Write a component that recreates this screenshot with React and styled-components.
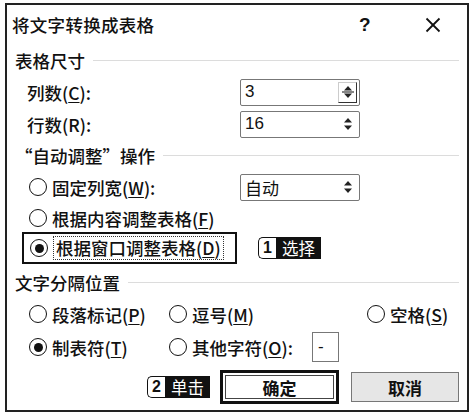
import React from 'react'
import styled, { createGlobalStyle } from 'styled-components'

const GlobalStyle = createGlobalStyle`
  html, body {
    margin: 0;
    padding: 0;
    background: #fff;
  }
  body {
    font-family: "Noto Sans CJK SC", "Noto Sans", sans-serif;
    color: #111;
  }
`

const Spinner = ({ boxed }) => (
  <SpinBox boxed={boxed}>
    <svg width="12" height="18" viewBox="0 0 12 18">
      <path d="M6 3 L10 7.5 L2 7.5 Z" fill="#222" />
      {boxed && <line x1="0" y1="9" x2="12" y2="9" stroke="#333" strokeWidth="1.2" />}
      <path d="M2 10.5 L10 10.5 L6 15 Z" fill="#222" />
    </svg>
  </SpinBox>
)

const Radio = ({ checked }) => (
  <RadioCircle>{checked && <RadioDot />}</RadioCircle>
)

const Key = ({ children }) => <U>{children}</U>

const App = () => {
  return (
    <>
      <GlobalStyle />
      <Page>
        <Dialog>
          <TitleBar>
            <Title>将文字转换成表格</Title>
            <Help>?</Help>
            <Close>
              <svg width="16" height="16" viewBox="0 0 16 16">
                <line x1="1.5" y1="1.5" x2="14.5" y2="14.5" stroke="#111" strokeWidth="1.8" />
                <line x1="14.5" y1="1.5" x2="1.5" y2="14.5" stroke="#111" strokeWidth="1.8" />
              </svg>
            </Close>
          </TitleBar>

          <Section h={32}>
            <SectionTitle>表格尺寸</SectionTitle>
            <Rule />
          </Section>
          <FieldRow h={32}>
            <Label>列数(<Key>C</Key>):</Label>
            <Field>
              <FieldText>3</FieldText>
              <Spinner boxed />
            </Field>
          </FieldRow>
          <FieldRow h={32}>
            <Label>行数(R):</Label>
            <Field>
              <FieldText>16</FieldText>
              <Spinner />
            </Field>
          </FieldRow>

          <Section h={30}>
            <SectionTitle>“自动调整”操作</SectionTitle>
            <Rule />
          </Section>
          <FieldRow h={34} pl={22}>
            <Option>
              <Radio />
              <span>固定列宽(<Key>W</Key>):</span>
            </Option>
            <Field>
              <FieldText>自动</FieldText>
              <Spinner />
            </Field>
          </FieldRow>
          <Row h={28} pl={22}>
            <Option>
              <Radio />
              <span>根据内容调整表格(<Key>F</Key>)</span>
            </Option>
          </Row>
          <Row h={32} pl={15}>
            <Selected>
              <Radio checked />
              <Focus>根据窗口调整表格(<Key>D</Key>)</Focus>
            </Selected>
            <Badge ml={21}>
              <BadgeNum>1</BadgeNum>
              <BadgeText>选择</BadgeText>
            </Badge>
          </Row>

          <Section h={36}>
            <SectionTitle>文字分隔位置</SectionTitle>
            <Rule />
          </Section>
          <SplitGrid>
            <Option>
              <Radio />
              <span>段落标记(<Key>P</Key>)</span>
            </Option>
            <Option>
              <Radio />
              <span>逗号(<Key>M</Key>)</span>
            </Option>
            <Option>
              <Radio />
              <span>空格(<Key>S</Key>)</span>
            </Option>
            <Option>
              <Radio checked />
              <span>制表符(<Key>T</Key>)</span>
            </Option>
            <Option>
              <Radio />
              <span>其他字符(<Key>O</Key>):</span>
              <CharBox>-</CharBox>
            </Option>
            <span />
          </SplitGrid>

          <Footer>
            <Badge>
              <BadgeNum>2</BadgeNum>
              <BadgeText>单击</BadgeText>
            </Badge>
            <OkButton>
              <OkInner>确定</OkInner>
            </OkButton>
            <CancelButton>取消</CancelButton>
          </Footer>
        </Dialog>
      </Page>
    </>
  )
}

export default App

// styles
const Page = styled.div`
  width: 472px;
  height: 420px;
  padding: 3px 0 0 5px;
  box-sizing: border-box;
`

const Dialog = styled.div`
  width: 464px;
  height: 409px;
  box-sizing: border-box;
  border: 2px solid #222;
  background: #fff;
  display: flex;
  flex-direction: column;
`

const TitleBar = styled.div`
  height: 39px;
  display: flex;
  align-items: center;
  padding-left: 5px;
`

const Title = styled.div`
  font-size: 17.5px;
  font-weight: 500;
  letter-spacing: 0.3px;
  flex: 1;
`

const Help = styled.div`
  font-family: "Liberation Sans", sans-serif;
  font-size: 19px;
  font-weight: 700;
  width: 12px;
  margin-right: 54px;
`

const Close = styled.div`
  width: 16px;
  height: 16px;
  margin-right: 26px;
  display: flex;
`

const Section = styled.div`
  height: ${p => p.h}px;
  display: flex;
  align-items: center;
  padding: 0 8px 0 8px;
`

const SectionTitle = styled.div`
  font-size: 17.5px;
  font-weight: 500;
  white-space: nowrap;
`

const Rule = styled.div`
  flex: 1;
  height: 1px;
  background: #dcdcdc;
  margin-left: 8px;
`

const Row = styled.div`
  height: ${p => p.h}px;
  display: flex;
  align-items: center;
  padding-left: ${p => p.pl || 20}px;
  font-size: 17.5px;
`

const FieldRow = styled(Row)`
  display: grid;
  grid-template-columns: ${p => 233 - (p.pl || 20)}px 120px;
  align-items: center;
`

const Label = styled.div`
  font-size: 17.5px;
  font-weight: 500;
`

const U = styled.span`
  text-decoration: underline;
  text-underline-offset: 2px;
`

const Field = styled.div`
  height: 27px;
  box-sizing: border-box;
  border: 1.5px solid #777;
  border-radius: 2px;
  display: flex;
  align-items: center;
  padding-left: 4px;
`

const FieldText = styled.div`
  flex: 1;
  font-size: 17px;
  font-family: "Liberation Sans", "Noto Sans CJK SC", sans-serif;
`

const SpinBox = styled.div`
  width: 19px;
  height: 21px;
  margin-right: 2px;
  box-sizing: border-box;
  display: flex;
  align-items: center;
  justify-content: center;
  border-top: ${p => (p.boxed ? '1px solid #ccc' : 'none')};
  border-left: ${p => (p.boxed ? '1px solid #ccc' : 'none')};
  border-bottom: ${p => (p.boxed ? '1.5px solid #333' : 'none')};
  border-right: ${p => (p.boxed ? '1.5px solid #333' : 'none')};
`

const Option = styled.div`
  display: flex;
  align-items: center;
  gap: 5px;
  font-size: 17.5px;
  font-weight: 500;
  white-space: nowrap;
`

const RadioCircle = styled.div`
  width: 18px;
  height: 18px;
  box-sizing: border-box;
  border: 1.8px solid #111;
  border-radius: 50%;
  display: flex;
  align-items: center;
  justify-content: center;
  flex-shrink: 0;
`

const RadioDot = styled.div`
  width: 9px;
  height: 9px;
  border-radius: 50%;
  background: #111;
`

const Selected = styled.div`
  height: 32px;
  width: 215px;
  box-sizing: border-box;
  border: 2.5px solid #111;
  display: flex;
  align-items: center;
  padding-left: 6px;
  gap: 5px;
  font-size: 17.5px;
  font-weight: 500;
  white-space: nowrap;
`

const Focus = styled.span`
  border: 1px dotted #333;
  padding: 0 2px;
  line-height: 22px;
`

const Badge = styled.div`
  display: flex;
  height: 22px;
  margin-left: ${p => p.ml || 0}px;
`

const BadgeNum = styled.div`
  width: 18px;
  box-sizing: border-box;
  border: 1.5px solid #111;
  border-right: none;
  border-radius: 5px 0 0 5px;
  background: #fff;
  font-family: "Liberation Sans", sans-serif;
  font-weight: 700;
  font-size: 16px;
  display: flex;
  align-items: center;
  justify-content: center;
`

const BadgeText = styled.div`
  background: #111;
  color: #fff;
  font-size: 16.5px;
  padding: 0 6px;
  display: flex;
  align-items: center;
`

const SplitGrid = styled.div`
  display: grid;
  grid-template-columns: 140px 198px auto;
  grid-template-rows: 28px 38px;
  align-items: center;
  padding-left: 22px;
`

const CharBox = styled.div`
  width: 27px;
  height: 30px;
  margin-left: 14px;
  box-sizing: border-box;
  border: 1.5px solid #777;
  font-family: "Liberation Sans", sans-serif;
  font-weight: 400;
  font-size: 17px;
  padding-left: 5px;
  display: flex;
  align-items: center;
`

const Footer = styled.div`
  flex: 1;
  display: flex;
  align-items: center;
  padding-left: 140px;
  padding-bottom: 2px;
`

const OkButton = styled.div`
  width: 119px;
  height: 34px;
  margin-left: 10px;
  box-sizing: border-box;
  border: 3px solid #111;
  padding: 2px;
  background: #fff;
`

const OkInner = styled.div`
  height: 100%;
  box-sizing: border-box;
  border: 1.5px solid #444;
  display: flex;
  align-items: center;
  justify-content: center;
  font-size: 17px;
  font-weight: 700;
`

const CancelButton = styled.div`
  width: 108px;
  height: 30px;
  margin-left: 12px;
  box-sizing: border-box;
  border: 1.5px solid #777;
  background: #e6e6e6;
  display: flex;
  align-items: center;
  justify-content: center;
  font-size: 17px;
  font-weight: 700;
`
